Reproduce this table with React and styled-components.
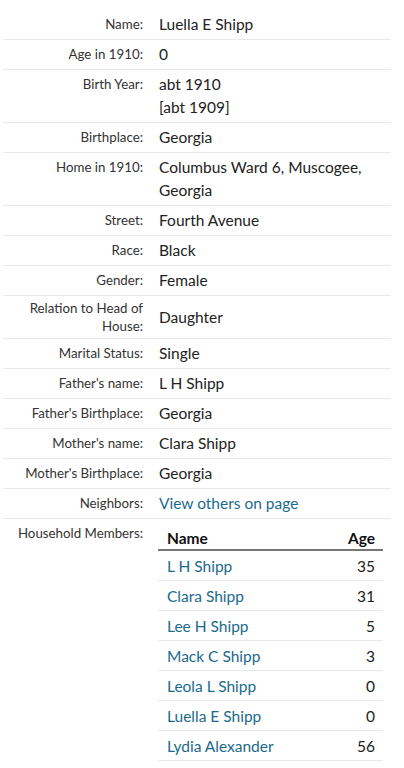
import React from "react";
import styled, { createGlobalStyle } from "styled-components";

const Global = createGlobalStyle`
  body {
    margin: 0;
    background: #fff;
    font-family: Lato, "Liberation Sans", sans-serif;
    color: #222;
  }
`;

const Page = styled.div`
  padding: 10px 13px 0 3px;
`;

const Row = styled.div`
  display: grid;
  grid-template-columns: 140px 1fr;
  column-gap: 16px;
  padding: ${(p) => (p.last ? "3px 0 0" : "3px 0")};
  border-bottom: ${(p) => (p.last ? "none" : "1px solid #e9e9e9")};
`;

const Label = styled.div`
  text-align: right;
  font-size: 13.3px;
  color: #333;
  align-self: ${(p) => (p.center ? "center" : "start")};
  line-height: ${(p) => (p.center ? "18px" : "23px")};
`;

const Value = styled.div`
  font-size: 15.5px;
  line-height: 23px;
  color: #222;
  align-self: center;
`;

const Link = styled.a`
  color: #1b6a8d;
  text-decoration: none;
`;

const Table = styled.table`
  width: 225px;
  margin-left: -1px;
  border-collapse: collapse;
  font-size: 15.5px;
`;

const Th = styled.th`
  text-align: ${(p) => (p.right ? "right" : "left")};
  font-weight: 700;
  color: #111;
  padding: 4px 8px 0 9px;
  height: 23px;
  line-height: 20px;
  border-bottom: 2px solid #777;
`;

const Td = styled.td`
  text-align: ${(p) => (p.right ? "right" : "left")};
  padding: 0 8px 0 9px;
  height: 29px;
  line-height: 20px;
  border-bottom: 1px solid #e9e9e9;
  color: #222;
`;

const fields = [
  ["Name:", "Luella E Shipp"],
  ["Age in 1910:", "0"],
  ["Birth Year:", <>abt 1910<br />[abt 1909]</>],
  ["Birthplace:", "Georgia"],
  ["Home in 1910:", "Columbus Ward 6, Muscogee, Georgia"],
  ["Street:", "Fourth Avenue"],
  ["Race:", "Black"],
  ["Gender:", "Female"],
  ["Relation to Head of House:", "Daughter", true],
  ["Marital Status:", "Single"],
  ["Father's name:", "L H Shipp"],
  ["Father's Birthplace:", "Georgia"],
  ["Mother's name:", "Clara Shipp"],
  ["Mother's Birthplace:", "Georgia"],
  ["Neighbors:", <Link href="#">View others on page</Link>],
];

const members = [
  ["L H Shipp", 35],
  ["Clara Shipp", 31],
  ["Lee H Shipp", 5],
  ["Mack C Shipp", 3],
  ["Leola L Shipp", 0],
  ["Luella E Shipp", 0],
  ["Lydia Alexander", 56],
];

export default function App() {
  return (
    <>
      <Global />
      <Page>
        {fields.map(([label, value, center]) => (
          <Row key={label}>
            <Label center={center}>{label}</Label>
            <Value>{value}</Value>
          </Row>
        ))}
        <Row last>
          <Label>Household Members:</Label>
          <Table>
            <thead>
              <tr>
                <Th>Name</Th>
                <Th right>Age</Th>
              </tr>
            </thead>
            <tbody>
              {members.map(([name, age]) => (
                <tr key={name}>
                  <Td><Link href="#">{name}</Link></Td>
                  <Td right>{age}</Td>
                </tr>
              ))}
            </tbody>
          </Table>
        </Row>
      </Page>
    </>
  );
}
